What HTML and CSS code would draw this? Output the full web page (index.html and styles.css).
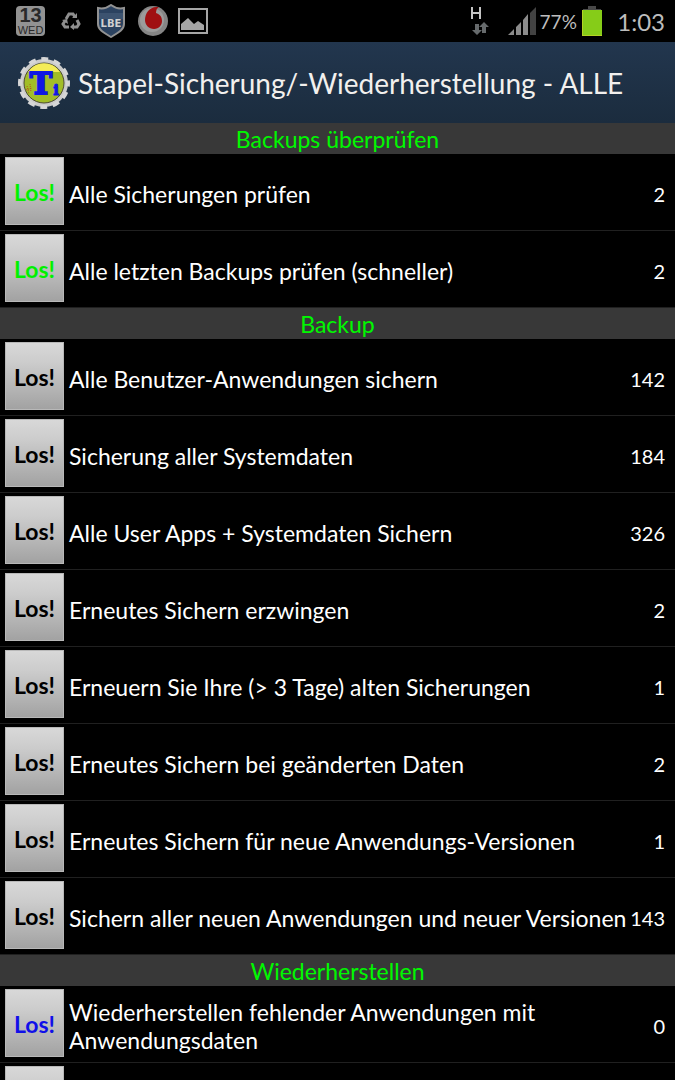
FILE: index.html
```html
<!DOCTYPE html>
<html lang="de">
<head>
	<meta charset="UTF-8">
	<meta name="viewport" content="width=device-width, initial-scale=1">
	<title>Stapel-Sicherung/-Wiederherstellung</title>
	<link rel="stylesheet" href="styles.css">
</head>
<body>
	<div class="screen">
		<div class="status">
			<div class="notes">
				<div class="date"><b>13</b><span>WED</span></div>
				<svg class="recycle" width="20" height="20" viewBox="0 0 20 20" fill="none" stroke="#8e8e8e" stroke-width="3">
					<path d="M5 8L8 3h4l2 3"/>
					<path d="M16 9l2 4-2 3h-4"/>
					<path d="M8 16H4l-2-3 2-3"/>
					<path d="M11 7h5V2zM13 12v7l-4-3zM1 9l5-1 1 5z" fill="#8e8e8e" stroke="none"/>
				</svg>
				<svg class="shield" width="30" height="34" viewBox="0 0 30 34">
					<path d="M15 1c4 3 9 4 13 3v16c0 6-6 9-13 13C8 29 2 26 2 20V4c4 1 9 0 13-3z" fill="#2b4260" stroke="#929292" stroke-width="2"/>
					<path d="M3 9h24v6H3z" fill="#3c5370"/>
					<text x="15" y="23" text-anchor="middle">LBE</text>
				</svg>
				<svg class="voda" width="30" height="32" viewBox="0 0 30 32">
					<circle cx="15" cy="16" r="15" fill="#858585"/>
					<circle cx="14" cy="15" r="12" fill="#9b9b9b"/>
					<path d="M20 2C12 1 7 8 7 15c0 5 4 9 9 9s8-4 8-8c0-5-3-7-6-8 0-3 1-5 3-6z" fill="#a01012"/>
				</svg>
				<svg class="photo" width="30" height="26" viewBox="0 0 30 26">
					<path d="M1 1h28v24H1z" fill="none" stroke="#a6a6a6" stroke-width="2"/>
					<path d="M3 22v-6l7-6 6 6 4-3 6 4v5z" fill="#a6a6a6"/>
				</svg>
			</div>
			<div class="signals">
				<svg class="data" width="20" height="30" viewBox="0 0 20 30">
					<path d="M2 1v12M10 1v12M2 7h8" fill="none" stroke="#c4c4c4" stroke-width="2"/>
					<path d="M5 18h4v6h3l-5 5-5-5h3zM9 21l5-5 5 5h-3v6h-4v-6z" fill="#666a6c"/>
				</svg>
				<svg class="bars" width="28" height="28" viewBox="0 0 28 28">
					<path d="M0 28l6-6v6zM8 28v-8l5-5v13zM15 28V13l5-6v21z" fill="#8b8b8b"/>
					<path d="M22 28V6l6-6v28z" fill="#424242"/>
				</svg>
				<span class="percent">77%</span>
				<svg class="battery" width="20" height="30" viewBox="0 0 20 30">
					<path d="M6 0h8v3h5v1H1V3h5z" fill="#484848"/>
					<path d="M0 4h20v26H0z" fill="#86cc18"/>
					<path d="M0 4h1v25h19v1H0z" fill="#b4d324"/>
				</svg>
				<span class="clock">1:03</span>
			</div>
		</div>

		<div class="header">
			<svg class="logo" width="52" height="52" viewBox="0 0 52 52">
				<circle cx="26" cy="26" r="24" fill="#cbcbcb"/>
				<circle cx="26" cy="26" r="24" fill="none" stroke="#d6d6d6" stroke-width="4" stroke-dasharray="7 5.566" stroke-dashoffset="3.5"/>
				<circle cx="26" cy="26" r="20" fill="#a2bd27" stroke="#4d4b34"/>
				<path d="M10 15a19 19 0 0 1 32 0z" fill="#f4ec58"/>
				<path d="M9 29l2 8M12 27l1 8M8 33l6-2" stroke="#b5521d" stroke-dasharray="1 1"/>
				<text x="23" y="37" class="big" text-anchor="middle">T</text>
				<text x="38" y="38" class="small" text-anchor="middle">i</text>
			</svg>
			<h1>Stapel-Sicherung/-Wiederherstellung - ALLE</h1>
		</div>

		<h2>Backups überprüfen</h2>
		<div class="row"><button class="green">Los!</button><p>Alle Sicherungen prüfen</p><span>2</span></div>
		<div class="row"><button class="green">Los!</button><p>Alle letzten Backups prüfen (schneller)</p><span>2</span></div>

		<h2>Backup</h2>
		<div class="row"><button>Los!</button><p>Alle Benutzer-Anwendungen sichern</p><span>142</span></div>
		<div class="row"><button>Los!</button><p>Sicherung aller Systemdaten</p><span>184</span></div>
		<div class="row"><button>Los!</button><p>Alle User Apps + Systemdaten Sichern</p><span>326</span></div>
		<div class="row"><button>Los!</button><p>Erneutes Sichern erzwingen</p><span>2</span></div>
		<div class="row"><button>Los!</button><p>Erneuern Sie Ihre (&gt; 3 Tage) alten Sicherungen</p><span>1</span></div>
		<div class="row"><button>Los!</button><p>Erneutes Sichern bei geänderten Daten</p><span>2</span></div>
		<div class="row"><button>Los!</button><p>Erneutes Sichern für neue Anwendungs-Versionen</p><span>1</span></div>
		<div class="row"><button>Los!</button><p>Sichern aller neuen Anwendungen und neuer Versionen</p><span>143</span></div>

		<h2>Wiederherstellen</h2>
		<div class="row"><button class="blue">Los!</button><p>Wiederherstellen fehlender Anwendungen mit Anwendungsdaten</p><span>0</span></div>
		<div class="row"><button class="blue" aria-label="Los!"></button></div>
	</div>
</body>
</html>
```

FILE: styles.css
```css
* {
	box-sizing: border-box;
	margin: 0;
	padding: 0;
}
body {
	background: #000;
	color: #fff;
	font-family: Lato, sans-serif;
}
.screen {
	height: 100vh;
	overflow: hidden;
}
svg {
	display: block;
	flex: none;
}

/* status bar */
.status {
	display: flex;
	justify-content: space-between;
	align-items: center;
	height: 42px;
	padding: 0 10px 0 16px;
	color: #bdbdbd;
}
.notes, .signals {
	display: flex;
	align-items: center;
}
.date {
	width: 29px;
	height: 30px;
	border-radius: 4px;
	background: #929292;
	color: #292929;
	text-align: center;
	font-family: "Liberation Sans", sans-serif;
}
.date b, .date span {
	display: block;
}
.date b {
	font-size: 20px;
	line-height: 19px;
}
.date span {
	font-size: 11px;
	line-height: 11px;
}
.recycle {
	margin-left: 16px;
}
.shield {
	margin-left: 15px;
}
.shield text {
	font: bold 10px "DejaVu Sans", sans-serif;
	fill: #d0d0d0;
}
.voda {
	margin-left: 12px;
}
.photo {
	margin-left: 10px;
}
.data {
	margin-right: 18px;
}
.percent {
	width: 44px;
	text-align: center;
	font-size: 19px;
}
.battery {
	margin: 0 15px 0 2px;
}
.clock {
	font-size: 24px;
}

/* title bar */
.header {
	display: flex;
	align-items: center;
	gap: 8px;
	height: 81px;
	padding-left: 18px;
	background: linear-gradient(#22364e, #1b2c3e);
}
.logo text {
	font-family: "DejaVu Serif", serif;
	font-weight: bold;
	fill: #1018e4;
	stroke: #1018e4;
}
.logo .big {
	font-size: 30px;
	stroke-width: 2px;
}
.logo .small {
	font-size: 15px;
}
h1 {
	color: #f2f0ee;
	font-size: 28px;
	font-weight: normal;
	white-space: nowrap;
}

/* list */
h2 {
	height: 31px;
	background: #383838;
	color: #00f800;
	font-size: 23px;
	font-weight: normal;
	line-height: 33px;
	text-align: center;
}
.row {
	display: flex;
	align-items: center;
	height: 77px;
	padding: 3px 10px 0 5px;
	border-bottom: 1px solid #202020;
	font-size: 23px;
	line-height: 28px;
}
.row button {
	flex: none;
	align-self: flex-start;
	width: 59px;
	height: 68px;
	margin-right: 5px;
	padding-top: 2px;
	border: 1px solid #b8b8b8;
	background: linear-gradient(#d8d8d8, #cccccc 30%, #a2a2a2);
	color: #000;
	font: bold 23px Lato, sans-serif;
	text-align: center;
}
.row .green {
	color: #00f000;
}
.row .blue {
	color: #1010e8;
}
.row p {
	flex: 1;
}
.row span {
	margin-left: 3px;
	font-size: 20px;
}
```
